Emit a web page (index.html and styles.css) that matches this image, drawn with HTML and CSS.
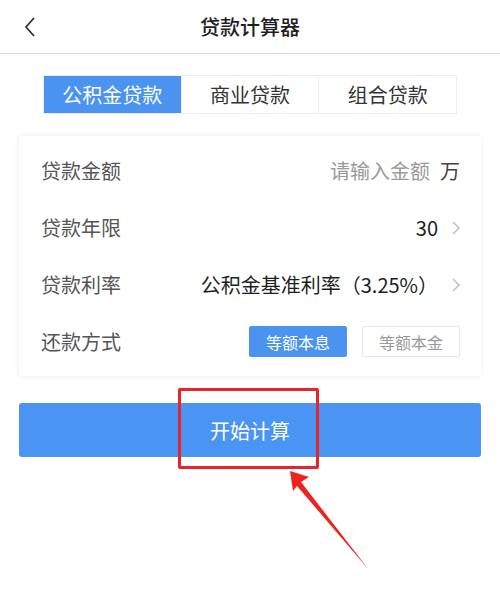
FILE: index.html
```html
<!DOCTYPE html>
<html lang="zh-CN">
<head>
    <meta charset="UTF-8">
    <meta name="viewport" content="width=device-width, initial-scale=1.0">
    <title>贷款计算器</title>
    <link rel="stylesheet" href="styles.css">
</head>
<body>
    <!-- Top bar -->
    <div class="header">
        <span class="back">
            <svg width="12" height="20" viewBox="0 0 12 20"><path d="M10 1 L2 10 L10 19" fill="none" stroke="#333" stroke-width="1.8"/></svg>
        </span>
        <span class="title">贷款计算器</span>
        <span></span>
    </div>

    <!-- Loan type tabs -->
    <div class="tabs">
        <div class="tab active">公积金贷款</div>
        <div class="tab">商业贷款</div>
        <div class="tab">组合贷款</div>
    </div>

    <!-- Form card -->
    <div class="card">
        <div class="row">
            <span class="label">贷款金额</span>
            <span class="value"><span class="placeholder">请输入金额</span><span class="unit">万</span></span>
        </div>
        <div class="row">
            <span class="label">贷款年限</span>
            <span class="value">30<span class="chevron"><svg width="8" height="14" viewBox="0 0 8 14"><path d="M1 1 L7 7 L1 13" fill="none" stroke="#bbb" stroke-width="1.4"/></svg></span></span>
        </div>
        <div class="row">
            <span class="label">贷款利率</span>
            <span class="value">公积金基准利率（3.25%）<span class="chevron"><svg width="8" height="14" viewBox="0 0 8 14"><path d="M1 1 L7 7 L1 13" fill="none" stroke="#bbb" stroke-width="1.4"/></svg></span></span>
        </div>
        <div class="row">
            <span class="label">还款方式</span>
            <span class="options">
                <span class="option selected">等额本息</span>
                <span class="option">等额本金</span>
            </span>
        </div>
    </div>

    <!-- Submit button with annotation -->
    <div class="submit-wrap">
        <div class="submit">开始计算</div>
        <div class="highlight"></div>
        <svg class="pointer" width="90" height="110" viewBox="0 0 90 110">
            <polygon points="0,2 19,8 11,13 79,101 7,17 3,22" fill="#f0221c"/>
        </svg>
    </div>
</body>
</html>
```

FILE: styles.css
```css
html, body {
    min-height: 100%;
}

body {
    margin: 0;
    padding: 0;
    min-height: 615px;
    background-color: #fff;
    font-family: "Noto Sans CJK SC", "Noto Sans", sans-serif;
    color: #222;
}

/* Top bar */
.header {
    height: 53px;
    border-bottom: 1px solid #dcdcdc;
    display: grid;
    grid-template-columns: 1fr auto 1fr;
    align-items: center;
}

.back {
    padding-left: 24px;
    display: flex;
    align-items: center;
}

.title {
    font-size: 20px;
    font-weight: 500;
    color: #1e1e1e;
}

/* Tabs */
.tabs {
    margin: 21px 43px 0 43px;
    display: flex;
    height: 39px;
    border: 1px solid #ececec;
    box-sizing: border-box;
}

.tab {
    flex: 1;
    display: flex;
    align-items: center;
    justify-content: center;
    font-size: 20px;
    color: #333;
    border-left: 1px solid #ececec;
}

.tab:first-child {
    border-left: none;
}

.tab.active {
    background-color: #4a93f0;
    color: #fff;
}

/* Form card */
.card {
    margin: 22px 19px 0 19px;
    padding: 6px 0;
    border-radius: 4px;
    box-shadow: 0 0 6px rgba(0, 0, 0, 0.08);
}

.row {
    height: 57px;
    display: flex;
    align-items: center;
    justify-content: space-between;
    padding: 0 21px 0 22px;
}

.label {
    font-size: 20px;
    color: #555;
}

.value {
    display: flex;
    align-items: center;
    font-size: 20px;
    color: #1e1e1e;
}

.placeholder {
    color: #9a9a9a;
}

.unit {
    margin-left: 10px;
    color: #444;
}

.chevron {
    margin-left: 14px;
    display: flex;
}

.options {
    display: flex;
    gap: 15px;
}

.option {
    width: 98px;
    height: 31px;
    box-sizing: border-box;
    border: 1px solid #e6e6e6;
    border-radius: 2px;
    display: flex;
    align-items: center;
    justify-content: center;
    font-size: 16px;
    color: #999;
}

.option.selected {
    background-color: #4a93f0;
    border-color: #4a93f0;
    color: #fff;
}

/* Submit */
.submit-wrap {
    position: relative;
    margin: 27px 19px 0 19px;
    padding-bottom: 130px;
}

.submit {
    height: 54px;
    border-radius: 3px;
    background-color: #4a94f4;
    color: #fff;
    font-size: 20px;
    display: flex;
    align-items: center;
    justify-content: center;
}

.highlight {
    position: absolute;
    left: 159px;
    top: -15px;
    width: 141px;
    height: 81px;
    box-sizing: border-box;
    border: 3px solid #e8232a;
    border-radius: 2px;
    z-index: 2;
}

.pointer {
    position: absolute;
    left: 271px;
    top: 66px;
    z-index: 2;
}
```
